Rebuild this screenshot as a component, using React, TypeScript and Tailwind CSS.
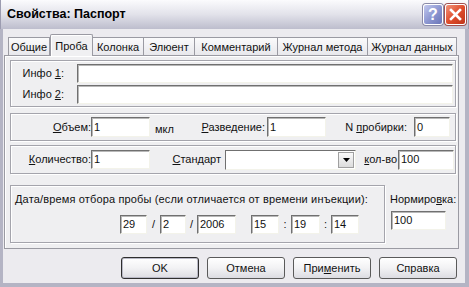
import React from "react";

function Field({ className, value }: { className: string; value?: string }) {
  return (
    <div
      className={
        "bg-white border border-t-[#707070] border-l-[#707070] border-b-[#f3f3ea] border-r-[#f3f3ea] shadow-[inset_1px_1px_0_#b8b8b8] flex items-center pl-[2px] leading-none " +
        className
      }
    >
      {value}
    </div>
  );
}

function Group({ className, children }: { className: string; children: React.ReactNode }) {
  return (
    <div
      className={
        "border border-[#a4a4ac] shadow-[inset_1px_1px_0_#ffffff,1px_1px_0_#ffffff] " + className
      }
    >
      {children}
    </div>
  );
}

function Button({ label, isDefault }: { label: React.ReactNode; isDefault?: boolean }) {
  return (
    <div
      className={
        "w-[78px] h-[22px] rounded-[3px] flex items-center justify-center bg-gradient-to-b from-[#ffffff] via-[#f2f2f4] to-[#dcdce2] " +
        (isDefault
          ? "border border-[#2e2e2e] shadow-[inset_0_0_0_1px_#b9b9c6]"
          : "border border-[#5a5a5a]")
      }
    >
      {label}
    </div>
  );
}

const tabs = [
  { label: "Общие", w: "w-[42px]" },
  { label: "Проба", w: "w-[43px]", active: true },
  { label: "Колонка", w: "w-[51px]" },
  { label: "Элюент", w: "w-[51px]" },
  { label: "Комментарий", w: "w-[83px]" },
  { label: "Журнал метода", w: "w-[90px]" },
  { label: "Журнал данных", w: "w-[89px]" },
];

export default function App() {
  return (
    <div className="w-[469px] h-[287px] overflow-hidden flex flex-col bg-[#ecebef] font-['Liberation_Sans',Arial,sans-serif] text-[11px] text-[#111]">
      {/* Title bar */}
      <div className="h-[29px] shrink-0 flex items-center pl-[6px] pr-[2px] bg-gradient-to-b from-[#fbfbfd] via-[#e2e2ea] to-[#bdbdcd] border-l border-r border-[#9c9cb0]">
        <span className="font-bold text-[12.5px] text-black">Свойства: Паспорт</span>
        <div className="ml-auto flex gap-[2px] items-center">
          <div className="w-[20px] h-[21px] rounded-[3px] border border-white bg-gradient-to-br from-[#c3c9ee] via-[#8e98d2] to-[#6c76b8] flex items-center justify-center text-white font-bold text-[16px] leading-none shadow-[0_0_0_1px_#8a8aa8]">
            ?
          </div>
          <div className="w-[21px] h-[21px] rounded-[3px] border border-white bg-gradient-to-br from-[#f1937a] via-[#df4d2c] to-[#c0341a] flex items-center justify-center shadow-[0_0_0_1px_#a05050]">
            <svg width="13" height="13" viewBox="0 0 13 13">
              <path d="M2 2 L11 11 M11 2 L2 11" stroke="#fff" strokeWidth="2.6" strokeLinecap="square" />
            </svg>
          </div>
        </div>
      </div>

      {/* Body */}
      <div className="flex-1 flex flex-col border-l-[3px] border-r-[4px] border-b-[4px] border-l-[#b4b4c4] border-r-[#b4b4c4] border-b-[#b4b4c4]">
        {/* Tabs */}
        <div className="mt-[4px] h-[22px] flex items-end pl-[5px] relative z-10">
          {tabs.map((t) =>
            t.active ? (
              <div
                key={t.label}
                className={
                  t.w +
                  " h-[22px] -mb-px flex items-start pt-[3px] justify-center bg-[#f0f0f2] border border-b-0 border-[#9a9aa2] rounded-t-[2px] shadow-[inset_1px_1px_0_#fff]"
                }
              >
                {t.label}
              </div>
            ) : (
              <div
                key={t.label}
                className={
                  t.w +
                  " h-[18px] flex items-center justify-center pt-[1px] bg-gradient-to-b from-[#fafafb] to-[#e8e8ec] border-t border-r border-[#9a9aa2] first:border-l border-b-0"
                }
              >
                {t.label}
              </div>
            )
          )}
        </div>

        {/* Panel */}
        <div className="ml-[1px] w-[455px] h-[194px] bg-[#efeff1] border border-[#9a9aa2] shadow-[inset_1px_1px_0_#fff] flex flex-col">
          {/* Info group */}
          <Group className="mt-[4px] ml-[5px] w-[446px] h-[47px] flex flex-col gap-[2px] pt-[3px]">
            <div className="flex items-center">
              <div className="w-[53px] text-right">
                Инфо <span className="underline">1</span>:
              </div>
              <Field className="ml-[13px] w-[376px] h-[19px]" />
            </div>
            <div className="flex items-center">
              <div className="w-[53px] text-right">
                Инфо <span className="underline">2</span>:
              </div>
              <Field className="ml-[13px] w-[376px] h-[19px]" />
            </div>
          </Group>

          {/* Volume group */}
          <Group className="mt-[6px] ml-[5px] w-[446px] h-[28px] flex items-center">
            <div className="w-[80px] text-right">
              <span className="underline">О</span>бъем:
            </div>
            <Field className="w-[59px] h-[20px]" value="1" />
            <div className="w-[40px] pl-[5px] pt-[4px]">мкл</div>
            <div className="w-[77px] text-right pr-[2px]">
              <span className="underline">Р</span>азведение:
            </div>
            <Field className="w-[59px] h-[20px]" value="1" />
            <div className="w-[88px] text-right pr-[7px]">
              N <span className="underline">п</span>робирки:
            </div>
            <Field className="w-[36px] h-[20px]" value="0" />
          </Group>

          {/* Quantity group */}
          <Group className="mt-[4px] ml-[5px] w-[446px] h-[29px] flex items-center">
            <div className="w-[80px] text-right">
              <span className="underline">К</span>оличество:
            </div>
            <Field className="w-[59px] h-[19px]" value="1" />
            <div className="w-[75px] text-right pr-[4px]">
              <span className="underline">С</span>тандарт
            </div>
            <div className="w-[131px] h-[20px] bg-white border border-t-[#707070] border-l-[#707070] border-b-[#f3f3ea] border-r-[#f3f3ea] flex justify-end items-center pr-[1px]">
              <div className="w-[16px] h-[16px] bg-gradient-to-b from-[#fafafa] to-[#dcdcdc] border border-[#a0a0a0] flex items-center justify-center">
                <svg width="7" height="4" viewBox="0 0 7 4">
                  <path d="M0 0 H7 L3.5 4 Z" fill="#000" />
                </svg>
              </div>
            </div>
            <div className="w-[42px] text-right pr-[1px]">
              <span className="underline">к</span>ол-во
            </div>
            <Field className="w-[56px] h-[20px]" value="100" />
          </Group>

          {/* Date + normalization */}
          <div className="mt-[11px] ml-[5px] flex">
            <Group className="w-[375px] h-[58px] flex flex-col">
              <div className="pl-[4px] pt-[7px] leading-[13px] tracking-[0.15px]">
                <span className="underline">Д</span>ата/время отбора пробы (если отличается от времени инъекции):
              </div>
              <div className="mt-[9px] ml-[109px] flex items-center">
                <Field className="w-[27px] h-[19px]" value="29" />
                <div className="w-[13px] text-center">/</div>
                <Field className="w-[26px] h-[19px]" value="2" />
                <div className="w-[11px] text-center">/</div>
                <Field className="w-[39px] h-[19px]" value="2006" />
                <div className="w-[15px]" />
                <Field className="w-[28px] h-[19px]" value="15" />
                <div className="w-[12px] text-center">:</div>
                <Field className="w-[29px] h-[19px]" value="19" />
                <div className="w-[11px] text-center">:</div>
                <Field className="w-[28px] h-[19px]" value="14" />
              </div>
            </Group>
            <div className="ml-[5px] flex flex-col">
              <div className="pt-[8px] leading-[13px]">
                Нормиро<span className="underline">в</span>ка:
              </div>
              <Field className="mt-[5px] ml-[1px] w-[55px] h-[19px]" value="100" />
            </div>
          </div>
        </div>

        {/* Buttons */}
        <div className="mt-[8px] flex gap-[8px] pl-[118px]">
          <Button label="OK" isDefault />
          <Button label="Отмена" />
          <Button
            label={
              <span>
                При<span className="underline">м</span>енить
              </span>
            }
          />
          <Button label="Справка" />
        </div>
      </div>
    </div>
  );
}
